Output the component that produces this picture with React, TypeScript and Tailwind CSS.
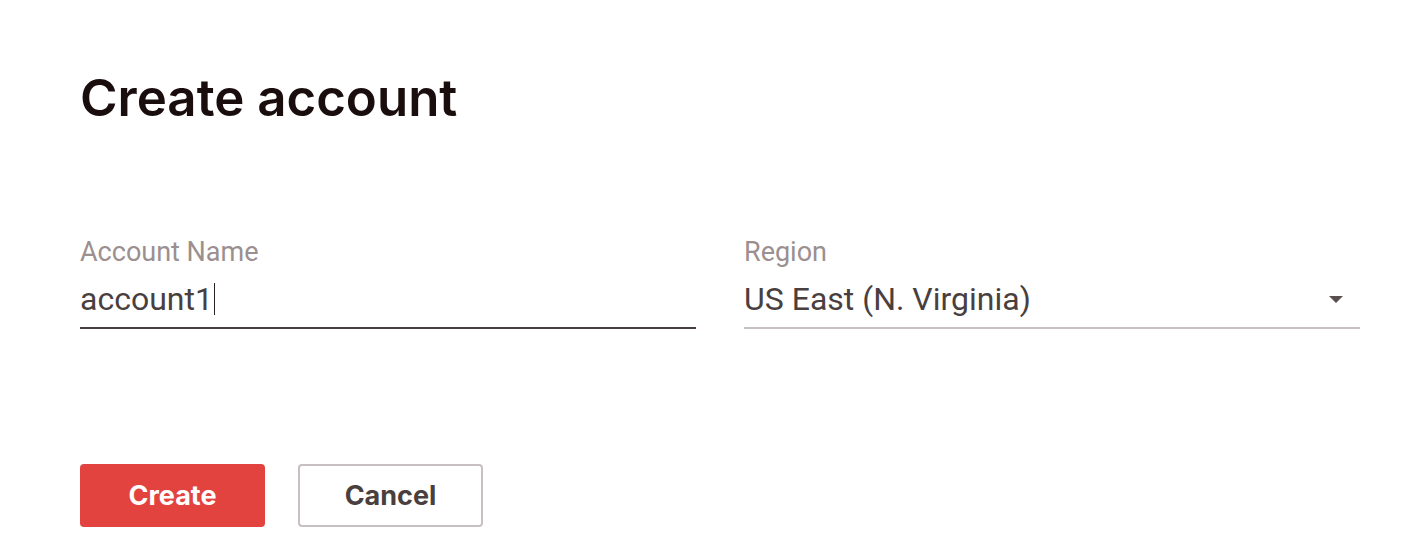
import { useState } from 'react'

const REGIONS = ['US East (N. Virginia)', 'US East (Ohio)', 'US West (Oregon)', 'EU (Ireland)']

export default function App() {
  const [name, setName] = useState('account1')
  const [region] = useState(REGIONS[0])

  return (
    <div className="min-h-[560px] bg-white px-[80px] pt-[70px] font-['Roboto',sans-serif]">
      {/* Titolo */}
      <h1 className="font-['Inter',sans-serif] text-[51px] leading-[56px] font-semibold text-[#1a0d0d]">
        Create account
      </h1>

      {/* Campi */}
      <div className="mt-[110px] grid w-[1280px] grid-cols-2 gap-x-[48px]">
        <div>
          <label className="block text-[27px] leading-[32px] text-[#9b8f8f]">Account Name</label>
          <div className="relative mt-[4px] flex items-center border-b-2 border-[#4a3f3f] pt-[7px] pb-[8px]">
            <span className="text-[32px] leading-[40px] text-[#4a3f3f]">{name}</span>
            <span className="ml-[1px] h-[32px] w-[1.5px] bg-[#2a2020]" />
            <input
              value={name}
              onChange={(e) => setName(e.target.value)}
              className="absolute inset-0 opacity-0"
            />
          </div>
        </div>
        <div>
          <label className="block text-[27px] leading-[32px] text-[#9b8f8f]">Region</label>
          <div className="mt-[4px] flex items-center justify-between border-b-2 border-[#c8c0c0] pt-[7px] pb-[8px]">
            <span className="text-[32px] leading-[40px] text-[#4a3f3f]">{region}</span>
            <svg width="14" height="7" viewBox="0 0 14 7" className="mr-[17px]">
              <path d="M0 0h14L7 7z" fill="#5a4f4f" />
            </svg>
          </div>
        </div>
      </div>

      {/* Azioni */}
      <div className="mt-[135px] flex gap-[33px] font-['Inter',sans-serif]">
        <button
          type="button"
          className="h-[63px] w-[185px] rounded-[4px] bg-[#e2433f] pt-[2px] text-[27px] font-bold text-white"
        >
          Create
        </button>
        <button
          type="button"
          className="h-[63px] w-[185px] rounded-[4px] border-2 border-[#c8c0c0] bg-white pt-[2px] text-[27px] font-bold text-[#4a3f3f]"
        >
          Cancel
        </button>
      </div>
    </div>
  )
}
